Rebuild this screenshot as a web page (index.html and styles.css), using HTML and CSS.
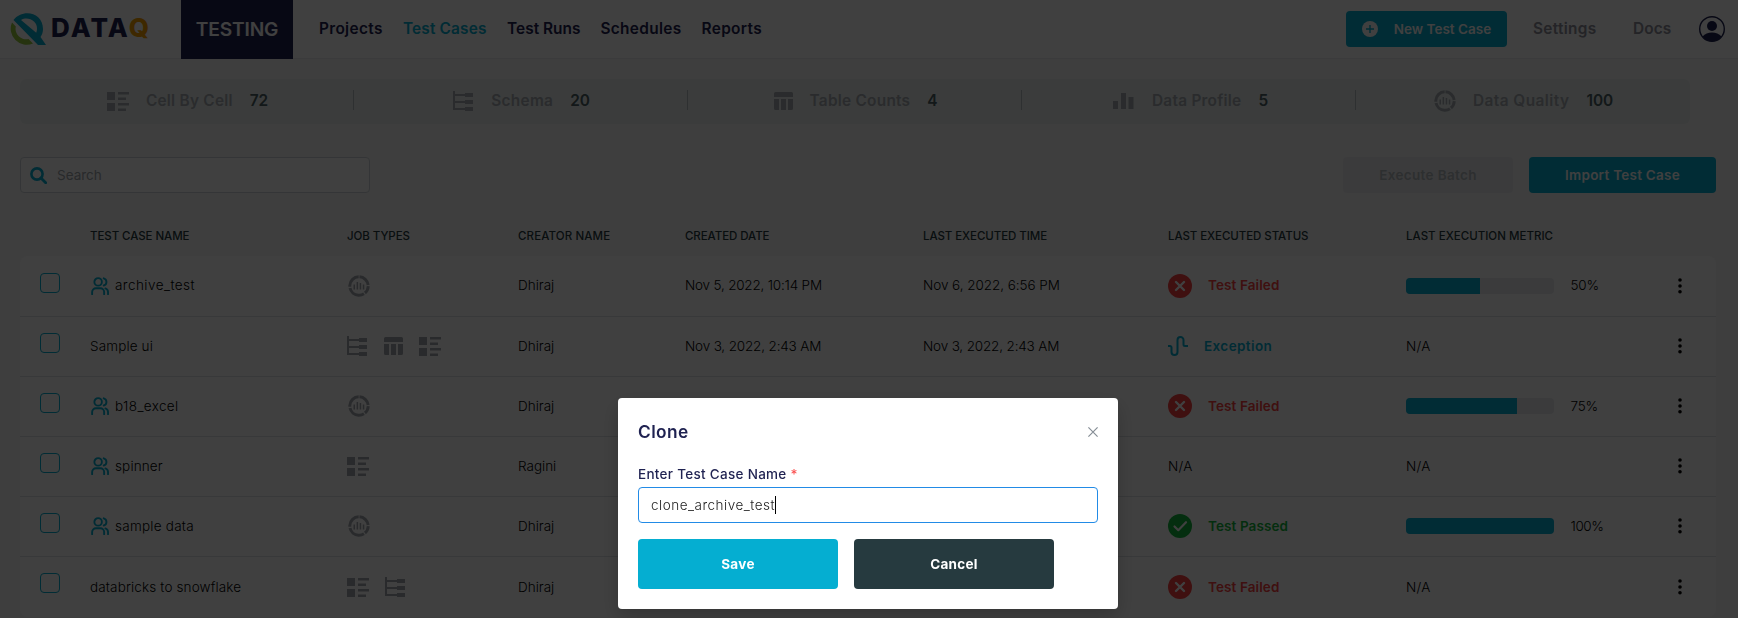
FILE: index.html
```html
<!DOCTYPE html>
<html lang="en">
<head>
<meta charset="utf-8">
<title>DataQ Testing</title>
<link rel="stylesheet" href="styles.css">
</head>
<body>
<svg class="defs" width="0" height="0">
  <symbol id="cell" viewBox="0 0 22 19"><path d="M0 0h8v8H0zM0 11h8v8H0zM11 0h11v2.6H11zM11 5.4h8V8h-8zM11 11h11v2.6H11zM11 16.4h8V19h-8z"/></symbol>
  <symbol id="schema" viewBox="0 0 21 20"><path d="M0 0h2v3h10V2h8v4h-8V5H2v5h10V9h8v4h-8v-1H2v5h10v-1h8v4h-8v-1H0z"/></symbol>
  <symbol id="table" viewBox="0 0 19 18"><path d="M1.5 0h16A1.5 1.5 0 0 1 19 1.500V5H0V1.500A1.500 1.500 0 0 1 1.500 0zM0 7h5v11H1.500A1.500 1.500 0 0 1 0 16.500zM7 7h5v11H7zM14 7h5v9.500a1.500 1.500 0 0 1-1.500 1.500H14z"/></symbol>
  <symbol id="profile" viewBox="0 0 21 16"><path d="M0 8h5v8H0zM8 0h5v16H8zM15.500 4h5v12h-5z"/></symbol>
  <symbol id="quality" viewBox="0 0 22 22"><circle cx="11" cy="11" r="9.200" fill="none" stroke="currentColor" stroke-width="3" stroke-dasharray="12.800 1.200 7.800 1.200 17.600 1.200 14.800 1.200" transform="rotate(-87 11 11)"/><path d="M5.500 9.500h1.500v5H5.500zM8.600 7h1.500v7.500H8.600zM11.700 8h1.500v6.500h-1.500zM14.800 9.500h1.500v5h-1.500z"/></symbol>
  <symbol id="users" viewBox="0 0 24 24"><g fill="none" stroke="currentColor" stroke-width="2.500" stroke-linecap="round"><circle cx="9.500" cy="6.500" r="5"/><path d="M1.500 23v-3a5 5 0 0 1 5-5h6a5 5 0 0 1 5 5v3M17 1.700a5 5 0 0 1 0 9.600M22.700 23v-3a5 5 0 0 0-3.500-4.800"/></g></symbol>
  <symbol id="fail" viewBox="0 0 24 24"><circle cx="12" cy="12" r="12" fill="#fa4040"/><path d="M8 8l8 8M16 8l-8 8" stroke="#fff" stroke-width="2.400" stroke-linecap="round"/></symbol>
  <symbol id="pass" viewBox="0 0 24 24"><circle cx="12" cy="12" r="12" fill="#12b83c"/><path d="M6.500 12.500l3.800 3.700 7.700-8" fill="none" stroke="#fff" stroke-width="2.200" stroke-linecap="round" stroke-linejoin="round"/></symbol>
  <symbol id="wave" viewBox="0 0 20 20"><path d="M0 10h2a1.500 1.500 0 0 1 1.500 1.500V16a3 3 0 0 0 6 0V4a3 3 0 0 1 6 0v4.500A1.500 1.500 0 0 0 17 10h3" fill="none" stroke="currentColor" stroke-width="2"/></symbol>
  <symbol id="dots" viewBox="0 0 4 16"><circle cx="2" cy="2" r="1.800"/><circle cx="2" cy="8" r="1.800"/><circle cx="2" cy="13.700" r="1.800"/></symbol>
</svg>

<header class="topbar">
  <div class="logo">
    <svg width="36" height="32" viewBox="0 0 36 32"><path d="M2 9.500A16 16 0 0 0 23 30.500L18.500 26A10.500 10.500 0 0 1 5.800 13.500z" fill="#96c93d"/><path d="M3.500 7C12-4.500 33-1.500 33 16c0 3-1 6-2.500 8l5.500 8h-8z" fill="#05aed1"/><path d="M11 7c7-4 16.500 1 16 9-.1 1.500-.3 2.500-.8 3.800z" fill="#fff"/></svg>
    <span class="brand">DATA<span class="brand-q">Q</span></span>
  </div>
  <div class="product">TESTING</div>
  <nav class="nav">
    <a class="n1">Projects</a><a class="n2 active">Test Cases</a><a class="n3">Test Runs</a><a class="n4">Schedules</a><a>Reports</a>
  </nav>
  <button class="btn new"><svg width="16" height="16" viewBox="0 0 16 16"><circle cx="8" cy="8" r="8" fill="#fff"/><path d="M8 4v8M4 8h8" stroke="#05aed1" stroke-width="1.400"/></svg>New Test Case</button>
  <a class="side settings">Settings</a>
  <a class="side docs">Docs</a>
  <svg class="avatar" width="26" height="26" viewBox="0 0 26 26"><circle cx="13" cy="13" r="12.300" fill="none" stroke="#1f2251" stroke-width="1.400"/><circle cx="13" cy="10" r="5" fill="#1f2251"/><path d="M3.500 20.500c2.500-2.700 5.500-4 9.500-4s7 1.300 9.500 4A12.300 12.300 0 0 1 13 25.500a12.300 12.300 0 0 1-9.500-5z" fill="#1f2251"/></svg>
</header>

<main class="page">
  <section class="stats">
    <div class="stat"><svg width="22" height="19"><use href="#cell"/></svg><span>Cell By Cell</span><b>72</b></div>
    <div class="stat s2"><svg width="21" height="20"><use href="#schema"/></svg><span>Schema</span><b>20</b></div>
    <div class="stat"><svg width="19" height="18"><use href="#table"/></svg><span>Table Counts</span><b>4</b></div>
    <div class="stat s4"><svg width="21" height="16"><use href="#profile"/></svg><span>Data Profile</span><b>5</b></div>
    <div class="stat s5"><svg width="22" height="22"><use href="#quality"/></svg><span>Data Quality</span><b>100</b></div>
  </section>

  <section class="tools">
    <div class="search"><svg width="17" height="17" viewBox="0 0 17 17"><g fill="none" stroke="#05aed1"><circle cx="7" cy="7" r="5.600" stroke-width="2.600"/><path d="M11 11l4.700 4.700" stroke-width="2.800" stroke-linecap="round"/></g></svg>Search</div>
    <button class="btn batch">Execute Batch</button>
    <button class="btn import">Import Test Case</button>
  </section>

  <div class="row head"><span></span><span>TEST CASE NAME</span><span>JOB TYPES</span><span class="creator">CREATOR NAME</span><span>CREATED DATE</span><span>LAST EXECUTED TIME</span><span>LAST EXECUTED STATUS</span><span class="metric-h">LAST EXECUTION METRIC</span></div>

  <section class="card">
    <div class="row first"><i class="check"></i><span class="name"><svg class="team"><use href="#users"/></svg><span class="w up">archive_test</span></span><span class="jobs"><svg class="q"><use href="#quality"/></svg></span><span class="up">Dhiraj</span><span class="date up">Nov 5, 2022, 10:14 PM</span><span class="date d2 up">Nov 6, 2022, 6:56 PM</span><span class="status red"><svg><use href="#fail"/></svg><span class="up">Test Failed</span></span><span class="metric"><i class="bar"><i class="fill" style="width:50%"></i></i><span class="pct up">50%</span></span><svg class="more"><use href="#dots"/></svg></div>
    <div class="row"><i class="check"></i><span class="name">Sample ui</span><span class="jobs"><svg width="21" height="20"><use href="#schema"/></svg><svg width="19" height="18"><use href="#table"/></svg><svg width="22" height="19"><use href="#cell"/></svg></span><span>Dhiraj</span><span class="date d3">Nov 3, 2022, 2:43 AM</span><span class="date d3">Nov 3, 2022, 2:43 AM</span><span class="status exc"><svg><use href="#wave"/></svg>Exception</span><span class="na">N/A</span><svg class="more"><use href="#dots"/></svg></div>
    <div class="row"><i class="check"></i><span class="name"><svg class="team"><use href="#users"/></svg><span class="w2">b18_excel</span></span><span class="jobs"><svg class="q"><use href="#quality"/></svg></span><span>Dhiraj</span><span></span><span></span><span class="status red"><svg><use href="#fail"/></svg>Test Failed</span><span class="metric"><i class="bar"><i class="fill" style="width:75%"></i></i><span class="pct">75%</span></span><svg class="more"><use href="#dots"/></svg></div>
    <div class="row"><i class="check"></i><span class="name"><svg class="team"><use href="#users"/></svg>spinner</span><span class="jobs"><svg width="22" height="19"><use href="#cell"/></svg></span><span class="ragini">Ragini</span><span></span><span></span><span class="na">N/A</span><span class="na">N/A</span><svg class="more"><use href="#dots"/></svg></div>
    <div class="row"><i class="check"></i><span class="name"><svg class="team"><use href="#users"/></svg><span class="w3">sample data</span></span><span class="jobs"><svg class="q"><use href="#quality"/></svg></span><span>Dhiraj</span><span></span><span></span><span class="status green"><svg><use href="#pass"/></svg>Test Passed</span><span class="metric"><i class="bar"><i class="fill" style="width:100%"></i></i><span class="pct p100">100%</span></span><svg class="more"><use href="#dots"/></svg></div>
    <div class="row"><i class="check"></i><span class="name">databricks to snowflake</span><span class="jobs"><svg width="22" height="19"><use href="#cell"/></svg><svg width="21" height="20"><use href="#schema"/></svg></span><span>Dhiraj</span><span></span><span></span><span class="status red"><svg><use href="#fail"/></svg>Test Failed</span><span class="na">N/A</span><svg class="more"><use href="#dots"/></svg></div>
  </section>
</main>

<div class="overlay">
  <div class="modal">
    <div class="modal-head"><h2>Clone</h2><svg width="10" height="10" viewBox="0 0 10 10"><path d="M.4.4l9.200 9.200M9.600.4L.4 9.600" stroke="#868e96" stroke-width="1.200"/></svg></div>
    <label>Enter Test Case Name <em>*</em></label>
    <div class="field">clone_archive_test<i class="caret"></i></div>
    <div class="actions"><button class="btn save">Save</button><button class="btn cancel">Cancel</button></div>
  </div>
</div>
</body>
</html>
```
FILE: styles.css
```css
* { box-sizing: border-box; }
body { margin: 0; width: 1738px; height: 618px; overflow: hidden; background: #f8f8f8; font: 300 13.5px/20px Inter, "Liberation Sans", sans-serif; color: #000; }
svg { flex: none; display: block; fill: currentColor; }
.defs { position: absolute; }
i { font-style: normal; }
.btn { display: flex; align-items: center; justify-content: center; height: 36px; border: 0; border-radius: 4px; padding: 0; background: #05aed1; color: #fff; font: 600 13.5px/20px Inter, sans-serif; }

.topbar { display: flex; align-items: center; height: 59px; background: #fff; border-bottom: 1px solid #e9ecef; }
.logo { display: flex; align-items: center; width: 181px; padding-left: 10px; gap: 5px; }
.brand { font-size: 26px; font-weight: 800; line-height: 30px; letter-spacing: 2.1px; color: #1f2251; white-space: nowrap; margin-top: -2px; }
.brand-q { color: #f59f00; }
.product { width: 112px; height: 59px; align-self: flex-start; line-height: 59px; text-align: center; background: #1f2251; color: #fff; font-size: 19.2px; font-weight: 600; letter-spacing: -.17px; }
.nav { display: flex; margin-left: 26px; width: 1027px; font-size: 15.4px; font-weight: 600; color: #1f2251; white-space: nowrap; }
.nav a { letter-spacing: .35px; }
.nav .n1 { width: 84px; }
.nav .n2 { width: 104px; letter-spacing: .15px; }
.nav .n3 { width: 93.5px; letter-spacing: .04px; }
.nav .n4 { width: 101px; letter-spacing: .32px; }
.nav .active { color: #05aed1; }
.new { width: 161px; gap: 16px; flex: none; margin-top: -1px; }
.side { font-size: 15.4px; font-weight: 600; color: #8e8e9a; letter-spacing: .3px; }
.settings { margin-left: 26px; width: 100px; }
.docs { letter-spacing: .1px; width: 66px; }

.page { padding: 20px 22px 0 20px; }
.stats { display: flex; width: 1670px; height: 45px; border-radius: 6px; background: #e9f0ef; }
.stat { display: flex; align-items: center; justify-content: center; width: 334px; padding: 0 0 1px 1px; background: linear-gradient(#b9bfc4, #b9bfc4) right 11px / 1px 20px no-repeat; color: #a8adb2; font-size: 15.4px; font-weight: 600; letter-spacing: .25px; }
.stat:last-child { background: none; }
.stat span { margin: 0 17px 0 17px; }
.s2 span { letter-spacing: .3px; }
.s4 { padding-left: 3px; }
.s4 span { margin-left: 18px; }
.s5 span { letter-spacing: .45px; }
.stat b { font-weight: 600; color: #4c5f64; letter-spacing: -.1px; }
.tools { display: flex; margin-top: 33px; height: 36px; }
.search { display: flex; align-items: center; gap: 10px; width: 350px; margin-right: 973px; padding-left: 9px; border: 1px solid #ced4da; border-radius: 4px; background: #fff; color: #a0a6ac; font-weight: 400; }
.batch { width: 170px; background: #ececee; color: #b4babf; letter-spacing: .35px; }
.import { width: 187px; margin-left: 16px; letter-spacing: .25px; }

.row { display: grid; grid-template-columns: 50px 257px 171px 167px 238px 245px 238px 272px 4px; align-items: center; padding: 0 0 1px 20px; height: 60px; border-bottom: 1px solid #dee2e6; white-space: nowrap; }
.row:last-child { border-bottom: 0; padding: 0 0 0 20px; }
.first { height: 61px; padding-bottom: 0; }
.head { height: 63px; padding-top: 23px; border: 0; font-size: 11.500px; font-weight: 500; color: #263a3f; letter-spacing: -.07px; }
.head .creator { letter-spacing: .13px; }
.head .metric-h { letter-spacing: .02px; }
.card { height: 361px; border-radius: 8px; background: #fff; }
.up { margin-top: -2px; }
.check { width: 20px; height: 20px; margin-top: -6px; border: 1px solid #05aed1; border-radius: 4px; }
.row:last-child .check { margin-top: -8px; }
.name { display: flex; align-items: center; gap: 6px; letter-spacing: .14px; }
.w { letter-spacing: .45px; }
.w2 { letter-spacing: .38px; }
.w3 { letter-spacing: .25px; }
.team { width: 18px; height: 18px; margin-left: 1px; color: #05aed1; }
.jobs { display: flex; align-items: center; gap: 16px; color: #a4a9b0; }
.q { width: 22px; height: 22px; margin-left: 1px; }
.date { letter-spacing: -.2px; }
.d2 { letter-spacing: -.05px; }
.d3 { letter-spacing: -.16px; }
.ragini { letter-spacing: 0; }
.na { letter-spacing: .3px; }
.status { display: flex; align-items: center; gap: 16px; font-weight: 600; letter-spacing: .1px; }
.status svg { width: 24px; height: 24px; }
.red { color: #fa4040; }
.green { color: #12b83c; }
.exc { color: #05aed1; letter-spacing: .4px; }
.exc svg { width: 20px; height: 20px; }
.metric { display: flex; align-items: center; gap: 16.500px; }
.bar { display: block; width: 148px; height: 16px; border-radius: 4px; overflow: hidden; background: #e9ecef; }
.fill { display: block; height: 16px; background: #05aed1; }
.pct { letter-spacing: -.16px; }
.p100 { letter-spacing: -.4px; }
.more { width: 4px; height: 16px; }

.overlay { position: fixed; inset: 0; background: rgba(0, 0, 0, .75); padding: 398px 0 0 618px; }
.modal { width: 500px; height: 211px; padding: 20px; border-radius: 4px; background: #fff; color: #1f2251; box-shadow: 0 8px 20px rgba(0, 0, 0, .2); }
.modal-head { display: flex; align-items: center; justify-content: space-between; height: 28px; }
h2 { margin: -1px 0 0; font-size: 17.300px; font-weight: 600; letter-spacing: .4px; }
.modal-head svg { margin-top: -1px; }
label { display: block; margin: 18px 0 3px; font-weight: 500; letter-spacing: .29px; }
em { font-style: normal; color: #fa5252; }
.field { display: flex; align-items: center; height: 36px; padding-left: 12px; border: 1px solid #228be6; border-radius: 4px; color: #222; letter-spacing: .5px; }
.caret { width: 1px; height: 18px; background: #000; }
.actions { display: flex; gap: 16px; margin-top: 16px; }
.actions .btn { width: 200px; height: 50px; font-weight: 700; letter-spacing: .3px; }
.actions .cancel { background: #263a3f; }
```
